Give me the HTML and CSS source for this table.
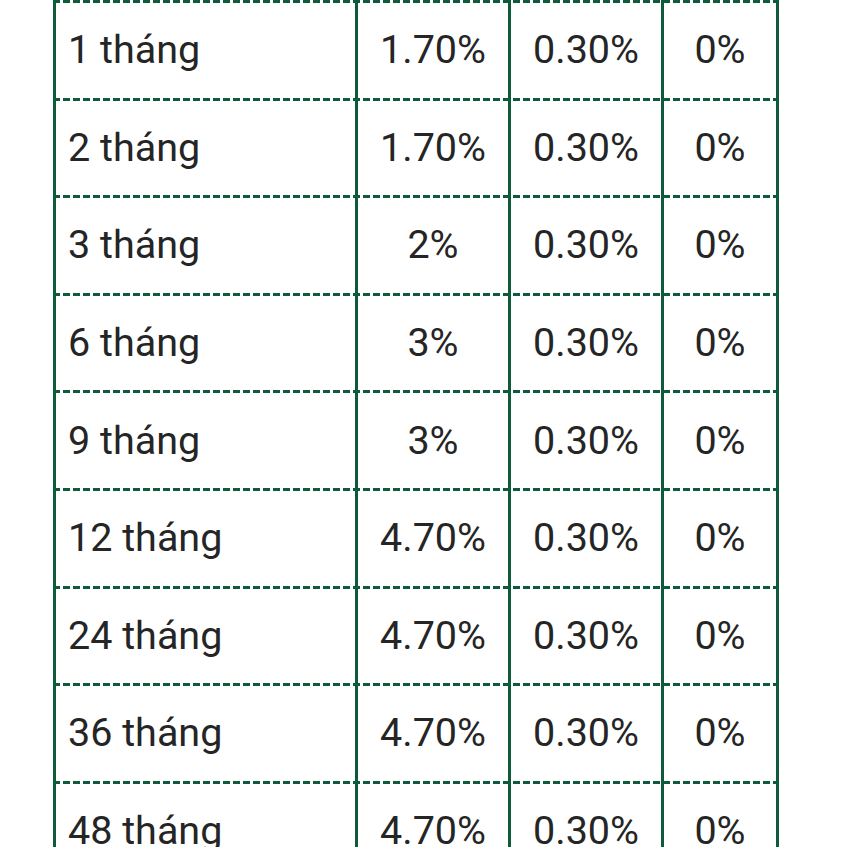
FILE: index.html
```html
<!DOCTYPE html>
<html lang="vi">
<head>
<meta charset="utf-8">
<link rel="stylesheet" href="styles.css">
</head>
<body>
<div class="table">
  <div class="row"><div class="cell term">1 tháng</div><div class="cell">1.70%</div><div class="cell">0.30%</div><div class="cell">0%</div></div>
  <div class="row"><div class="cell term">2 tháng</div><div class="cell">1.70%</div><div class="cell">0.30%</div><div class="cell">0%</div></div>
  <div class="row"><div class="cell term">3 tháng</div><div class="cell">2%</div><div class="cell">0.30%</div><div class="cell">0%</div></div>
  <div class="row"><div class="cell term">6 tháng</div><div class="cell">3%</div><div class="cell">0.30%</div><div class="cell">0%</div></div>
  <div class="row"><div class="cell term">9 tháng</div><div class="cell">3%</div><div class="cell">0.30%</div><div class="cell">0%</div></div>
  <div class="row"><div class="cell term">12 tháng</div><div class="cell">4.70%</div><div class="cell">0.30%</div><div class="cell">0%</div></div>
  <div class="row"><div class="cell term">24 tháng</div><div class="cell">4.70%</div><div class="cell">0.30%</div><div class="cell">0%</div></div>
  <div class="row"><div class="cell term">36 tháng</div><div class="cell">4.70%</div><div class="cell">0.30%</div><div class="cell">0%</div></div>
  <div class="row"><div class="cell term">48 tháng</div><div class="cell">4.70%</div><div class="cell">0.30%</div><div class="cell">0%</div></div>
</div>
</body>
</html>
```
FILE: styles.css
```css
html, body {
  margin: 0;
  padding: 0;
  background: #ffffff;
  overflow: hidden;
}
body {
  font-family: Roboto, "Liberation Sans", sans-serif;
  color: #252525;
}
.table {
  margin-left: 53px;
  width: 723px;
  border-right: 3px solid #0e5a3b;
}
.row {
  display: grid;
  grid-template-columns: 302px 153px 153px 115px;
  height: 97.6px;
  background-image: repeating-linear-gradient(to right, #0e5a3b 0 7px, transparent 7px 10px);
  background-size: 100% 3px;
  background-repeat: no-repeat;
  background-position: 0 0;
}
.cell {
  border-left: 3px solid #0e5a3b;
  display: flex;
  align-items: center;
  justify-content: center;
  font-size: 39.5px;
  padding-top: 2px;
  box-sizing: border-box;
}
.cell.term {
  justify-content: flex-start;
  padding-left: 12px;
}
```
